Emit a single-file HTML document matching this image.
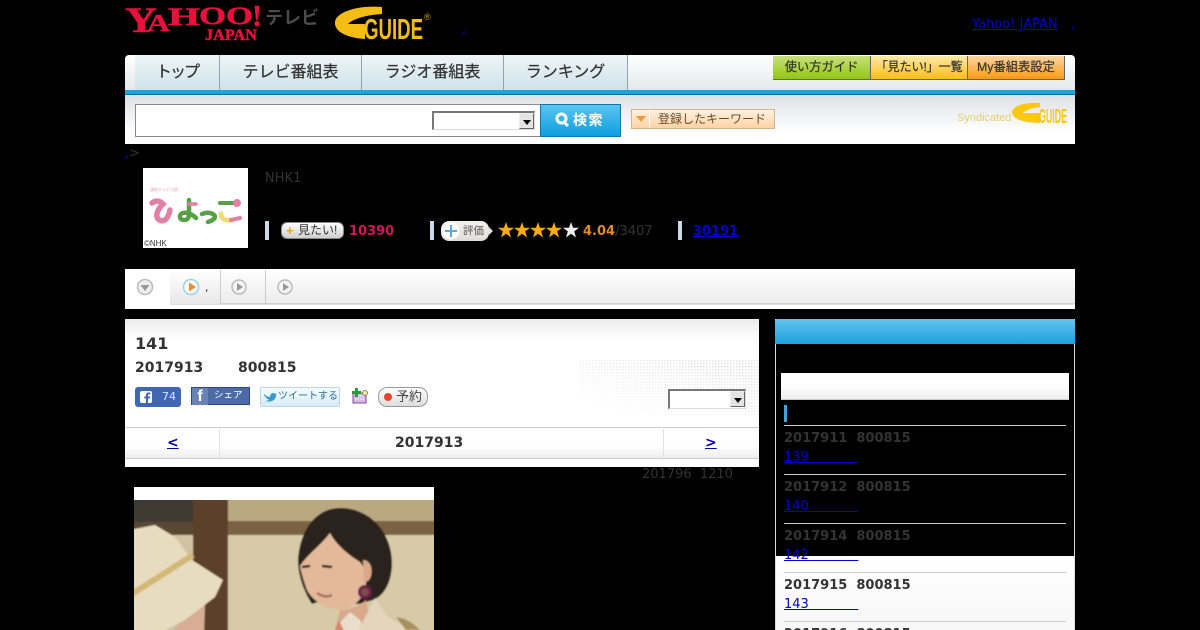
<!DOCTYPE html>
<html lang="ja"><head><meta charset="utf-8"><title>141</title>
<style>
html,body{margin:0;padding:0;background:#000;width:1200px;height:630px;overflow:hidden;}
#w{position:relative;width:1200px;height:630px;overflow:hidden;font-family:"DejaVu Sans",sans-serif;color:#333;}
.a{position:absolute;white-space:nowrap;}
.jp{font-family:"Liberation Sans","Noto Sans CJK JP",sans-serif;}
a{color:#00c;}
.tab{position:absolute;top:55px;height:35px;background:linear-gradient(#eff5f7,#cfe2ea);border-right:1px solid #8fa5ae;font:16px/35px "Liberation Sans","Noto Sans CJK JP",sans-serif;color:#333;text-align:center;white-space:nowrap;-webkit-text-stroke:.25px #333;}
.gb{position:absolute;top:56px;height:24px;border:1px solid #666;border-width:0 1px 1px 0;font:12.3px/23px "Liberation Sans","Noto Sans CJK JP",sans-serif;color:#333;text-align:center;box-sizing:border-box;white-space:nowrap;-webkit-text-stroke:.2px #333;}
.sel{position:absolute;height:19px;background:#fff;border:1px solid;border-color:#777 #ddd #ddd #777;border-width:2px 1px 1px 2px;box-sizing:border-box;}
.sel i{position:absolute;right:0;top:0;bottom:0;width:15px;background:#e4e4e4;border:1px solid;border-color:#eee #666 #666 #eee;box-sizing:border-box;}
.sel i:after{content:"";position:absolute;left:3px;top:6px;border:4px solid transparent;border-top:5px solid #000;border-bottom:0;}
.vb{position:absolute;top:221px;width:4px;height:19px;background:#cdd9e6;}
.hr{position:absolute;left:784px;width:282px;height:1px;background:#ccc;}
.dt{position:absolute;left:784px;font:bold 13px/16px "DejaVu Sans",sans-serif;white-space:pre;}
.ln{position:absolute;left:784px;font:13px/16px "DejaVu Sans",sans-serif;color:#00c;text-decoration:underline;white-space:pre;}
</style></head><body><div id="w">

<!-- logos -->
<svg class="a" style="left:125px;top:0" width="140" height="44" viewBox="0 0 140 44" font-family="Liberation Serif,serif" font-weight="bold" fill="#e8113a" stroke="#e8113a" stroke-width=".5">
<text x="0" y="32" font-size="36" textLength="32" lengthAdjust="spacingAndGlyphs">Y</text>
<text x="22" y="31" font-size="24" textLength="23" lengthAdjust="spacingAndGlyphs">A</text>
<text x="43" y="25" font-size="25" textLength="32" lengthAdjust="spacingAndGlyphs">H</text>
<text x="74" y="24" font-size="25" textLength="54" lengthAdjust="spacingAndGlyphs">OO</text>
<text x="127" y="26" font-size="31" textLength="10" lengthAdjust="spacingAndGlyphs">!</text>
<text x="80" y="40" font-size="16" textLength="52" lengthAdjust="spacingAndGlyphs">JAPAN</text>
</svg>
<div class="a jp" style="left:265px;top:8px;font:bold 18px/20px 'Liberation Sans','Noto Sans CJK JP',sans-serif;color:#4c4c4c;">テレビ</div>
<svg class="a" style="left:334px;top:6px" width="100" height="36" viewBox="0 0 100 36">
<path d="M48 1C24-1 2 6 1 16C0 26 14 32 31 33V18H14C20 12 34 9 48 8Z" fill="#f3bd14"/>
<text x="30" y="33" font-family="Liberation Sans,sans-serif" font-weight="bold" font-size="29" fill="#f3bd14" textLength="59" lengthAdjust="spacingAndGlyphs">GUIDE</text>
<text x="90" y="14" font-family="Liberation Sans,sans-serif" font-size="9" fill="#c9a224">®</text>
</svg>
<div class="a" style="left:972px;top:17px;font:13px/16px 'DejaVu Sans',sans-serif;color:#00c;text-decoration:underline;">Yahoo! JAPAN</div>
<div class="a" style="left:1071px;top:17px;font:13px/16px 'DejaVu Sans',sans-serif;color:#00c;">,</div>
<div class="a" style="left:462px;top:22px;font:13px/16px 'DejaVu Sans',sans-serif;color:#00c;">,</div>

<!-- nav -->
<div class="a" style="left:125px;top:55px;width:950px;height:35px;background:linear-gradient(#fff,#e4e9ea);border-radius:4px 4px 0 0;"></div>
<div class="tab" style="left:135px;width:84px;letter-spacing:-2px;">トップ</div>
<div class="tab" style="left:220px;width:141px;">テレビ番組表</div>
<div class="tab" style="left:362px;width:141px;">ラジオ番組表</div>
<div class="tab" style="left:504px;width:123px;">ランキング</div>
<div class="gb" style="left:773px;width:98px;background:linear-gradient(#c7e07a,#93c615);">使い方ガイド</div>
<div class="gb" style="left:871px;width:97px;background:linear-gradient(#ffe9a5,#fdbd18);letter-spacing:-.3px;">「見たい!」一覧</div>
<div class="gb" style="left:968px;width:97px;background:linear-gradient(#fed5a0,#fb9a14);">My番組表設定</div>
<div class="a" style="left:125px;top:90px;width:950px;height:5px;background:#1ba4de;border-bottom:1px solid #0a6f9e;box-sizing:border-box;"></div>

<!-- search -->
<div class="a" style="left:125px;top:95px;width:950px;height:49px;background:linear-gradient(#dde1e4,#fff 75%);"></div>
<div class="a" style="left:135px;top:104px;width:406px;height:33px;background:#fff;border:1px solid #888;box-sizing:border-box;"></div>
<div class="sel" style="left:432px;top:111px;width:103px;"><i></i></div>
<div class="a" style="left:540px;top:104px;width:81px;height:33px;background:linear-gradient(#5cc5ef,#0c9ee0);border:1px solid #0a78ad;box-sizing:border-box;"></div>
<svg class="a" style="left:555px;top:112px" width="15" height="16" viewBox="0 0 15 16"><circle cx="6.500" cy="6.500" r="4.500" fill="none" stroke="#fff" stroke-width="3"/><path d="M9 10L13 14" stroke="#fff" stroke-width="3"/></svg>
<div class="a" style="left:573px;top:111px;color:#fff;font:bold 14px/18px 'Liberation Sans','Noto Sans CJK JP',sans-serif;letter-spacing:1.500px;">検索</div>
<div class="a" style="left:631px;top:109px;width:144px;height:20px;background:linear-gradient(#fff1e1,#fdd3a4);border:1px solid #d3b48c;box-sizing:border-box;font:12px/18px 'Liberation Sans','Noto Sans CJK JP',sans-serif;color:#6b4a26;padding-left:26px;">登録したキーワード</div>
<div class="a" style="left:649px;top:110px;width:1px;height:18px;background:#fff;"></div>
<div class="a" style="left:636px;top:116px;border:5px solid transparent;border-top:6px solid #ef9a3a;border-bottom:0;"></div>
<div class="a" style="left:957px;top:111px;font:11px/14px 'Liberation Sans',sans-serif;color:#e5cf72;">Syndicated</div>
<svg class="a" style="left:1012px;top:102px" width="56" height="23" viewBox="0 0 56 23">
<path d="M28 1C12 0 1 4 0 10C0 17 12 21 28 21V11H11C14 8 20 6 28 5Z" fill="#fac711"/>
<text x="27" y="21" font-family="Liberation Sans,sans-serif" font-weight="bold" font-size="20" fill="#fac711" textLength="28" lengthAdjust="spacingAndGlyphs">GUIDE</text>
</svg>

<!-- breadcrumb -->
<div class="a" style="left:125px;top:146px;font:13px/16px 'DejaVu Sans',sans-serif;color:#333;"><span style="color:#00c;">,</span>&gt;</div>

<!-- programme head -->
<div class="a" style="left:143px;top:168px;width:105px;height:80px;background:#fff;"></div>
<svg class="a" style="left:143px;top:168px" width="105" height="80" viewBox="0 0 105 80">
<text x="7" y="23" font-family="Noto Sans CJK JP,sans-serif" font-size="4" fill="#e8a0ac">連続テレビ小説</text>
<path d="M9 35C13 32 17 33 20 36C15 41 12 47 15 51C20 55 25 52 27 42" fill="none" stroke="#e27fa4" stroke-width="5.500" stroke-linecap="round"/>
<path d="M46 32V47C46 54 36 53 37 48C38 43 47 44 53 50" fill="none" stroke="#58a046" stroke-width="4.500" stroke-linecap="round"/>
<path d="M46 36H53" stroke="#e27fa4" stroke-width="3.500" stroke-linecap="round"/>
<path d="M59 46C66 43 72 46 72 49C71 52 68 53 65 54" fill="none" stroke="#58a046" stroke-width="4.500" stroke-linecap="round"/>
<path d="M77 35H93" stroke="#58a046" stroke-width="4" stroke-linecap="round"/>
<circle cx="94" cy="35" r="4" fill="#e27fa4"/>
<path d="M78 46C78 52 84 53 89 52" fill="none" stroke="#eedc7a" stroke-width="5" stroke-linecap="round"/>
<path d="M88 52L97 50" stroke="#e27fa4" stroke-width="4" stroke-linecap="round"/>
<text x="1" y="78" font-family="Liberation Sans,sans-serif" font-size="8" fill="#333">©NHK</text>
</svg>
<div class="a" style="left:265px;top:171px;font:13px/16px 'DejaVu Sans',sans-serif;color:#333;">NHK1</div>

<div class="vb" style="left:265px;"></div>
<div class="a" style="left:281px;top:222px;width:63px;height:17px;background:linear-gradient(#fff,#cfcfcf);border:1px solid #888;border-radius:6px;box-sizing:border-box;font:12px/15px 'Liberation Sans','Noto Sans CJK JP',sans-serif;color:#333;padding-left:16px;">見たい!</div>
<div class="a" style="left:286px;top:224px;font:bold 13px/13px 'Liberation Sans',sans-serif;color:#e8a21c;">+</div>
<div class="a" style="left:349px;top:224px;font:bold 13px/16px 'DejaVu Sans',sans-serif;color:#d5145a;">10390</div>
<div class="vb" style="left:430px;"></div>
<div class="a" style="left:441px;top:221px;width:48px;height:20px;background:linear-gradient(#f4f0ec,#e2ddd8);border-radius:8px;box-sizing:border-box;font:10.500px/20px 'Liberation Sans','Noto Sans CJK JP',sans-serif;color:#555;padding-left:22px;">評価</div>
<div class="a" style="left:489px;top:227px;border:4px solid transparent;border-left:4px solid #e2ddd8;border-right:0;"></div>
<svg class="a" style="left:442px;top:222px" width="18" height="18" viewBox="0 0 18 18"><circle cx="9" cy="9" r="8.500" fill="#fff"/><path d="M9 3V15M3 9H15" stroke="#5aa7d8" stroke-width="2"/></svg>
<svg class="a" style="left:498px;top:221px" width="82" height="19" viewBox="0 0 82 19">
<defs><path id="s" d="M8 1L10 6.800H16L11.200 10.400L13 16.500L8 12.800L3 16.500L4.800 10.400L0 6.800H6Z"/></defs>
<use href="#s" x="0" fill="#f6ab12"/><use href="#s" x="16" fill="#f6ab12"/><use href="#s" x="32" fill="#f6ab12"/><use href="#s" x="48" fill="#f6ab12"/><use href="#s" x="65" fill="#eeeeee"/>
</svg>
<div class="a" style="left:583px;top:224px;font:13px/16px 'DejaVu Sans',sans-serif;color:#333;"><b style="color:#e08a2a;">4.04</b>/3407</div>
<div class="vb" style="left:678px;"></div>
<div class="a" style="left:693px;top:224px;font:bold 13px/16px 'DejaVu Sans',sans-serif;color:#00c;text-decoration:underline;">30191</div>

<!-- sub tabs -->
<div class="a" style="left:125px;top:269px;width:950px;height:40px;background:linear-gradient(#fff,#ececec 85%,#ccc 86%,#ccc 88%,#fff 90%);"></div>
<div class="a" style="left:125px;top:270px;width:45px;height:39px;background:#fff;"></div>
<div class="a" style="left:170px;top:270px;width:50px;height:34px;background:linear-gradient(#fff,#e8e8e8);"></div>
<div class="a" style="left:220px;top:270px;width:1px;height:34px;background:#ccc;"></div>
<div class="a" style="left:265px;top:270px;width:1px;height:34px;background:#ccc;"></div>
<svg class="a" style="left:135px;top:277px" width="160" height="20" viewBox="0 0 160 20">
<circle cx="10" cy="10" r="7.500" fill="#eee" stroke="#bbb" stroke-width="1.500"/><path d="M5.500 8H14.500L10 14Z" fill="#999"/>
<circle cx="56" cy="10" r="7.500" fill="#f8f8f8" stroke="#9fd0e8" stroke-width="1.500"/><path d="M54 5.500V14.500L61 10Z" fill="#ed8a2c"/>
<circle cx="104" cy="10" r="7" fill="#f4f4f4" stroke="#bbb" stroke-width="1.500"/><path d="M102 6V14L108 10Z" fill="#999"/>
<circle cx="150" cy="10" r="7" fill="#f4f4f4" stroke="#bbb" stroke-width="1.500"/><path d="M148 6V14L154 10Z" fill="#999"/>
</svg>
<div class="a" style="left:205px;top:281px;font:11px/14px 'DejaVu Sans',sans-serif;color:#333;">,</div>

<!-- main card -->
<div class="a" style="left:125px;top:319px;width:634px;height:148px;background:linear-gradient(#ececec,#fff 22px);"></div>
<svg class="a" style="left:580px;top:360px" width="179" height="55" viewBox="0 0 179 55">
<defs><pattern id="d" width="3" height="3" patternUnits="userSpaceOnUse"><rect width="1.500" height="1.500" fill="#e4e4e4"/></pattern>
<linearGradient id="g" x1="0" y1="1" x2="1" y2="0"><stop offset=".1" stop-color="#fff" stop-opacity="0"/><stop offset=".8" stop-color="#fff" stop-opacity="1"/></linearGradient>
<mask id="m"><rect width="179" height="55" fill="url(#g)"/></mask></defs>
<rect width="179" height="55" fill="url(#d)" mask="url(#m)"/>
</svg>
<div class="a" style="left:135px;top:334px;font:bold 16px/20px 'DejaVu Sans',sans-serif;">141</div>
<div class="a" style="left:135px;top:360px;font:bold 14px/17px 'DejaVu Sans',sans-serif;white-space:pre;">2017913</div>
<div class="a" style="left:238px;top:360px;font:bold 14px/17px 'DejaVu Sans',sans-serif;">800815</div>

<div class="a" style="left:135px;top:387px;width:46px;height:20px;background:#4267b2;border-radius:3px;"></div>
<div class="a" style="left:140px;top:391px;width:12px;height:12px;background:#fff;border-radius:2px;overflow:hidden;"></div>
<svg class="a" style="left:140px;top:391px" width="12" height="12" viewBox="0 0 12 12"><path d="M8 12V7.500H10L10.300 5.500H8V4.300C8 3.700 8.300 3.300 9 3.300H10.400V1.500H8.500C6.800 1.500 6 2.500 6 4V5.500H4.300V7.500H6V12Z" fill="#4267b2"/></svg>
<div class="a" style="left:162px;top:390px;font:11px/14px 'DejaVu Sans',sans-serif;color:#dfe6f3;">74</div>

<div class="a" style="left:191px;top:387px;width:59px;height:18px;background:#4c6aa6;border:1px solid #2e4a80;box-sizing:border-box;"></div>
<div class="a" style="left:192px;top:388px;width:16px;height:17px;background:#6a83b6;font:bold 16px/18px 'Liberation Sans',sans-serif;color:#fff;text-align:center;">f</div>
<div class="a" style="left:214px;top:389px;font:9.500px/14px 'Liberation Sans','Noto Sans CJK JP',sans-serif;color:#fff;">シェア</div>

<div class="a" style="left:260px;top:387px;width:80px;height:20px;background:linear-gradient(#f5fbfe,#d8ecf7);border:1px solid #b9d6e6;border-radius:2px;box-sizing:border-box;font:10px/18px 'Liberation Sans','Noto Sans CJK JP',sans-serif;color:#2a6f9a;padding-left:17px;">ツイートする</div>
<svg class="a" style="left:263px;top:391px" width="14" height="12" viewBox="0 0 14 12"><path d="M1 3C3 5 5 6 7 6C7 2 11 1 12 3L14 2.500L13 4.500C13 9 8 12 2 10C4 10 5 9.500 6 8.500C4 8 3 7 3 6C2 6 1 5 1 3Z" fill="#3a9ad0"/></svg>

<svg class="a" style="left:351px;top:388px" width="17" height="16" viewBox="0 0 17 16">
<rect x="2" y="5" width="13" height="10" fill="#d8b8e8" stroke="#7a4a98"/><path d="M4 8H13M4 11H13" stroke="#fff" stroke-dasharray="1.500 1"/>
<path d="M4 0H7V3H10V6H7V9H4V6H1V3H4Z" fill="#2a9a3a"/><circle cx="14" cy="5" r="2.500" fill="#f4e8a0" stroke="#887"/>
</svg>

<div class="a" style="left:378px;top:387px;width:50px;height:20px;background:linear-gradient(#fff,#ddd);border:1px solid #999;border-radius:9px;box-sizing:border-box;font:13px/18px 'Liberation Sans','Noto Sans CJK JP',sans-serif;color:#444;padding-left:17px;">予約</div>
<div class="a" style="left:384px;top:393px;width:8px;height:8px;background:#e8432c;border-radius:50%;"></div>

<div class="sel" style="left:668px;top:389px;width:78px;height:20px;"><i style="top:0;bottom:1px;"></i></div>

<div class="a" style="left:125px;top:427px;width:634px;height:32px;background:linear-gradient(#fff 60%,#eee);border-top:1px solid #ccc;border-bottom:1px solid #ccc;box-sizing:border-box;"></div>
<div class="a" style="left:219px;top:429px;width:1px;height:28px;background:#e2e2e2;"></div>
<div class="a" style="left:663px;top:429px;width:1px;height:28px;background:#e2e2e2;"></div>
<div class="a" style="left:167px;top:435px;font:bold 14px/17px 'DejaVu Sans',sans-serif;color:#00a;text-decoration:underline;">&lt;</div>
<div class="a" style="left:395px;top:435px;font:bold 14px/17px 'DejaVu Sans',sans-serif;">2017913</div>
<div class="a" style="left:705px;top:435px;font:bold 14px/17px 'DejaVu Sans',sans-serif;color:#00a;text-decoration:underline;">&gt;</div>
<div class="a" style="left:642px;top:467px;font:13px/16px 'DejaVu Sans',sans-serif;color:#333;white-space:pre;">201796  1210</div>

<!-- photo -->
<div class="a" style="left:134px;top:487px;width:300px;height:13px;background:#fff;"></div>
<svg class="a" style="left:134px;top:500px" width="300" height="130" viewBox="0 0 300 130">
<defs><filter id="b" x="-5%" y="-5%" width="110%" height="110%"><feGaussianBlur stdDeviation=".9"/></filter><clipPath id="c"><rect width="300" height="130"/></clipPath></defs>
<g clip-path="url(#c)"><g filter="url(#b)">
<rect x="-5" y="-5" width="310" height="26" fill="#b9a880"/>
<rect x="-5" y="35" width="310" height="100" fill="#d6cba6"/>
<rect x="-5" y="21" width="310" height="14" fill="#7a6243"/>
<rect x="-5" y="-5" width="66" height="27" fill="#3f3a33"/>
<rect x="-5" y="22" width="66" height="13" fill="#5a4632"/>
<rect x="-5" y="35" width="65" height="100" fill="#cfc3a0"/>
<rect x="59" y="-5" width="35" height="140" fill="#5d3f2a"/>
<path d="M35 135L50 118L71 103L70 135Z" fill="#d8ad94"/>
<path d="M-5 30L21 25L41 37L58 60L89 80L81 97L51 120L28 132H-5Z" fill="#e7dcc0"/>
<path d="M-5 96L59 55" stroke="#d3b777" stroke-width="6" fill="none"/>
<path d="M164 60C166 30 182 8 206 8C238 8 258 35 258 63C258 82 250 96 239 100L225 104L190 100L178 104C172 95 164 78 164 60Z" fill="#2c211d"/>
<path d="M166 66C172 56 186 46 196 33C203 46 215 55 226 62L232 70L232 84L230 93C224 104 214 110 204 110C190 108 178 100 173 90C170 82 167 72 166 66Z" fill="#e3b99a"/>
<path d="M229 60C236 60 239 68 237 76C235 82 232 82 230 82Z" fill="#d9a98a"/>
<path d="M168 67L176 66M188 66L198 67" stroke="#2f1d18" stroke-width="2.500"/>
<path d="M183 93C189 97 194 97 198 95" stroke="#a46a5e" stroke-width="2.500" fill="none"/>
<circle cx="231" cy="92" r="5.500" fill="#7a5048" stroke="#6a1e46" stroke-width="3"/>
<path d="M206 110C218 110 228 104 232 100L238 135H200Z" fill="#d9a98a"/>
<path d="M194 135L216 112L226 120L232 135Z" fill="#e9decb"/>
<path d="M198 135L205 120L212 135Z" fill="#d8876a"/>
<path d="M222 135L241 98L254 117L284 135Z" fill="#e3d6bc"/>
<path d="M262 117C272 118 280 124 286 130H272Z" fill="#a8905c"/>
</g></g>
</svg>

<!-- sidebar -->
<div class="a" style="left:775px;top:319px;width:300px;height:311px;border:1px solid #ddd;border-width:0 1px;box-sizing:border-box;"></div>
<div class="a" style="left:776px;top:556px;width:298px;height:74px;background:linear-gradient(#fff,#f7f7f7);"></div>
<div class="a" style="left:775px;top:319px;width:300px;height:25px;background:linear-gradient(#62c4ec,#1ba1e0);border-radius:2px 2px 0 0;"></div>
<div class="a" style="left:781px;top:373px;width:288px;height:27px;background:linear-gradient(#fff 50%,#eee);border-bottom:1px solid #ccc;box-sizing:border-box;"></div>
<div class="a" style="left:784px;top:405px;width:3px;height:17px;background:#3ea7d8;"></div>
<div class="hr" style="top:425px;"></div>
<div class="dt" style="top:431px;">2017911  800815</div>
<div class="ln" style="top:450px;">139            </div>
<div class="hr" style="top:474px;"></div>
<div class="dt" style="top:480px;">2017912  800815</div>
<div class="ln" style="top:499px;">140            </div>
<div class="hr" style="top:523px;"></div>
<div class="dt" style="top:529px;">2017914  800815</div>
<div class="ln" style="top:548px;">142            </div>
<div class="hr" style="top:572px;"></div>
<div class="dt" style="top:578px;">2017915  800815</div>
<div class="ln" style="top:597px;">143            </div>
<div class="hr" style="top:621px;"></div>
<div class="dt" style="top:627px;">2017916  800815</div>

</div></body></html>
